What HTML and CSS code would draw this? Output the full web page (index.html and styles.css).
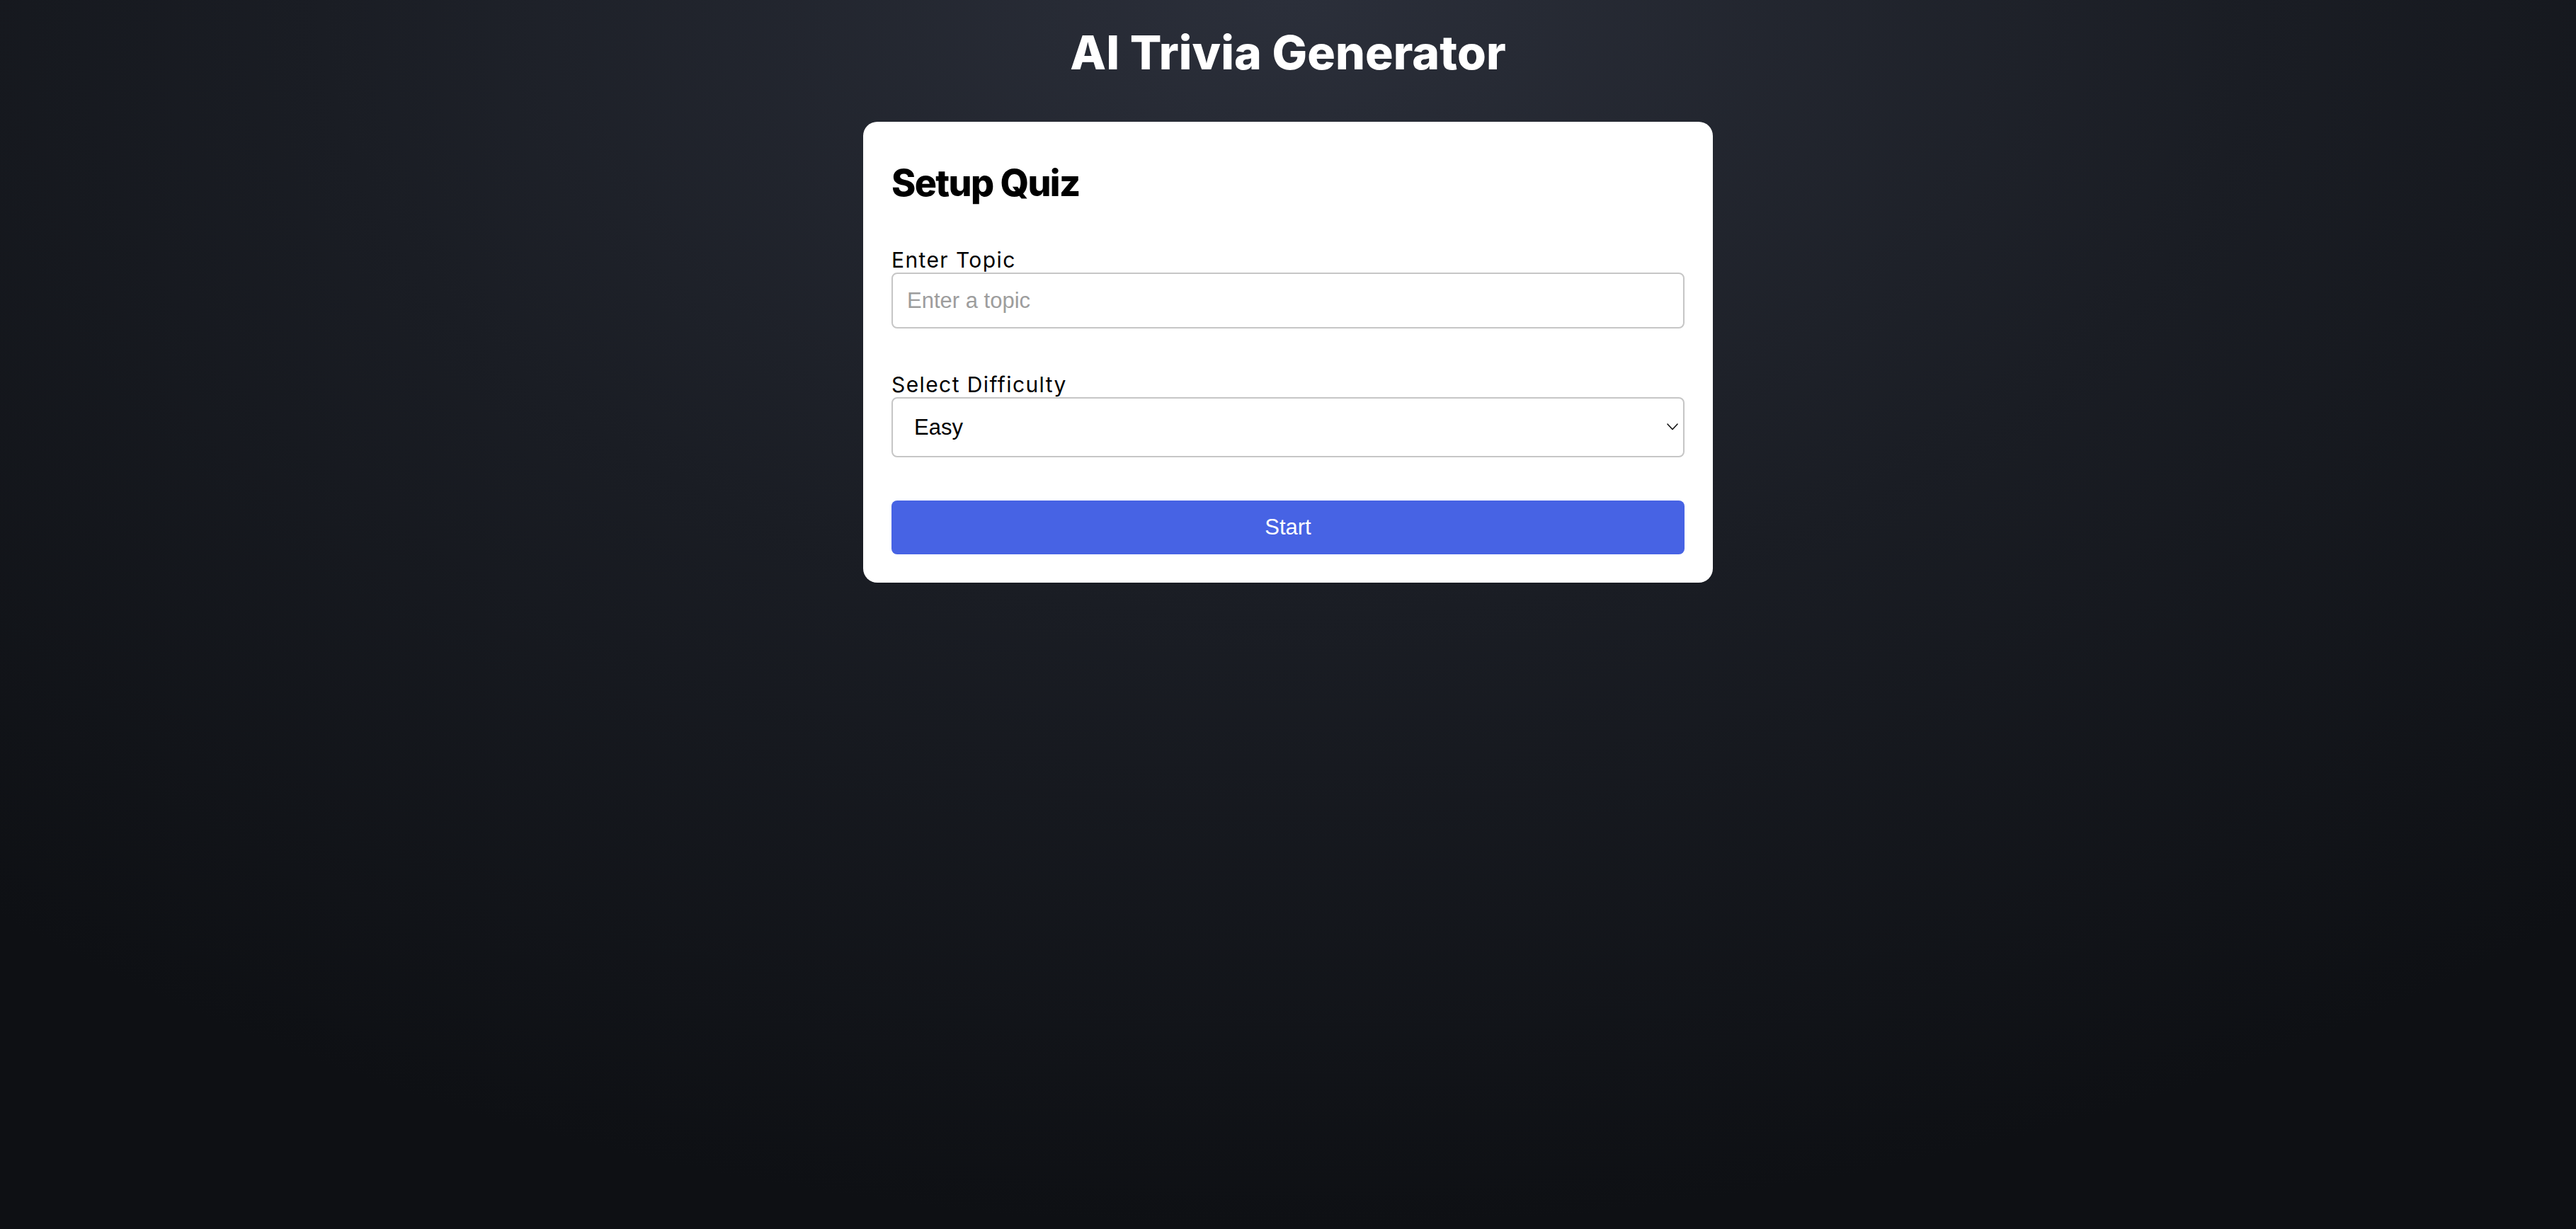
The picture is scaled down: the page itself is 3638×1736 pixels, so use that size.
FILE: index.html
```html
<!DOCTYPE html>
<html lang="en">
<head>
<meta charset="utf-8">
<title>AI Trivia Generator</title>
<link rel="stylesheet" href="styles.css">
</head>
<body>
  <main class="app">
    <h1 class="app-title">AI Trivia Generator</h1>
    <section class="card">
      <h2 class="card-title">Setup Quiz</h2>
      <div class="field">
        <label class="field-label" for="topic">Enter Topic</label>
        <input class="text-input" id="topic" type="text" placeholder="Enter a topic">
      </div>
      <div class="field">
        <label class="field-label" for="difficulty">Select Difficulty</label>
        <div class="select-wrap">
          <select class="select-input" id="difficulty">
            <option>Easy</option>
            <option>Medium</option>
            <option>Hard</option>
          </select>
          <svg class="select-chevron" width="16" height="10" viewBox="0 0 16 10" aria-hidden="true">
            <path d="M1 1 L8 8.5 L15 1" fill="none" stroke="#111" stroke-width="1.6" stroke-linecap="round" stroke-linejoin="round"/>
          </svg>
        </div>
      </div>
      <button class="start-btn" type="button">Start</button>
    </section>
  </main>
</body>
</html>
```

FILE: styles.css
```css
html, body {
  margin: 0;
  padding: 0;
  min-height: 100%;
}

body {
  min-height: 100vh;
  background: radial-gradient(ellipse 75% 100% at 50% 0%, #2b2f3a 0%, #1a1d24 50%, #0e1014 100%);
  background-color: #0e1014;
  font-family: Inter, "Noto Sans", sans-serif;
  color: #000;
}

.app {
  display: flex;
  flex-direction: column;
  align-items: center;
  padding-top: 34px;
}

.app-title {
  margin: 0;
  font-family: Inter, "Noto Sans", sans-serif;
  font-weight: 800;
  font-size: 66px;
  line-height: 80px;
  color: #fff;
  letter-spacing: 0.1px;
}

.card {
  margin-top: 58px;
  width: 1200px;
  box-sizing: border-box;
  padding: 40px;
  background: #fff;
  border-radius: 20px;
  display: flex;
  flex-direction: column;
  gap: 61px;
}

.card-title {
  margin: 18px 0 0;
  font-family: Inter, "Noto Sans", sans-serif;
  font-weight: 800;
  font-size: 52px;
  line-height: 58px;
  letter-spacing: -1.6px;
}

.field {
  display: flex;
  flex-direction: column;
}

.field-label {
  font-family: Inter, "Noto Sans", sans-serif;
  font-size: 30px;
  line-height: 36px;
  font-weight: 400;
  letter-spacing: 1.4px;
}

.text-input,
.select-input {
  box-sizing: border-box;
  width: 100%;
  border: 2px solid #c6c6c6;
  border-radius: 8px;
  background: #fff;
  font-family: "Liberation Sans", Arial, sans-serif;
  font-size: 31px;
  color: #000;
  outline: none;
  margin: 0;
}

.text-input {
  height: 79px;
  padding: 0 20px;
}

.text-input::placeholder {
  color: #9d9d9d;
}

.select-wrap {
  position: relative;
}

.select-input {
  height: 85px;
  padding: 0 30px;
  appearance: none;
  -webkit-appearance: none;
}

.select-chevron {
  position: absolute;
  right: 9px;
  top: 37px;
  pointer-events: none;
}

.start-btn {
  height: 76px;
  border: none;
  border-radius: 8px;
  background: #4763e4;
  color: #fff;
  font-family: "Liberation Sans", Arial, sans-serif;
  font-size: 31px;
  cursor: pointer;
}
```
